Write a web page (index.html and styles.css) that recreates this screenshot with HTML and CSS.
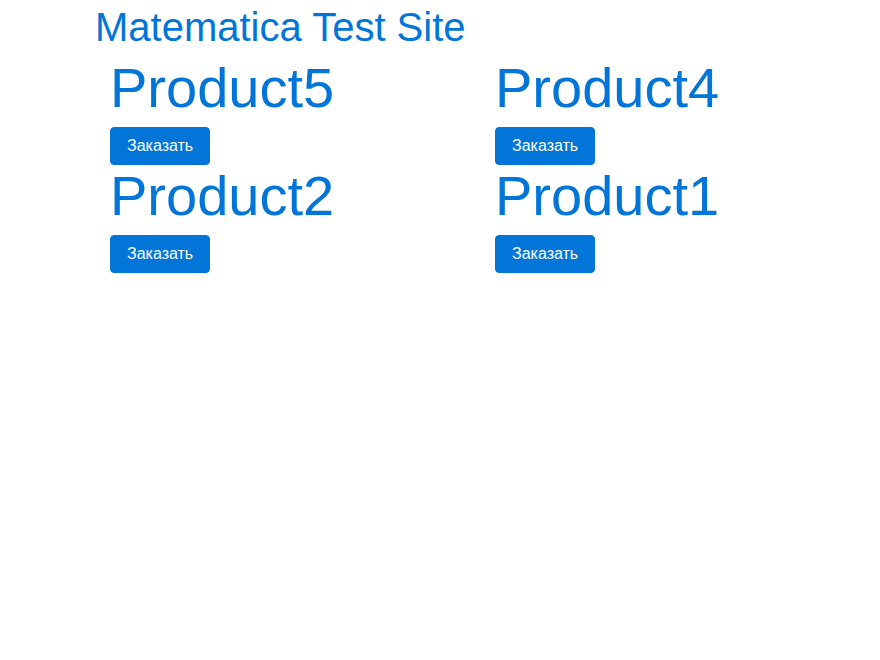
FILE: index.html
```html
<!DOCTYPE html>
<html lang="ru">
<head>
<meta charset="utf-8">
<title>Matematica Test Site</title>
<link rel="stylesheet" href="styles.css">
</head>
<body>
<div class="page">
  <h1 class="site-title"><a href="#">Matematica Test Site</a></h1>
  <main class="products">
    <article class="product">
      <h2 class="product-name"><a href="#">Product5</a></h2>
      <button class="btn" type="button">Заказать</button>
    </article>
    <article class="product">
      <h2 class="product-name"><a href="#">Product4</a></h2>
      <button class="btn" type="button">Заказать</button>
    </article>
    <article class="product">
      <h2 class="product-name"><a href="#">Product2</a></h2>
      <button class="btn" type="button">Заказать</button>
    </article>
    <article class="product">
      <h2 class="product-name"><a href="#">Product1</a></h2>
      <button class="btn" type="button">Заказать</button>
    </article>
  </main>
</div>
</body>
</html>
```
FILE: styles.css
```css
* {
  box-sizing: border-box;
}

body {
  margin: 0;
  background: #fff;
  color: #373a3c;
  font-family: "Liberation Sans", Arial, sans-serif;
  font-size: 16px;
  line-height: 24px;
}

a {
  color: #0275d8;
  text-decoration: none;
}

.page {
  padding: 5px 15px 0 95px;
}

.site-title {
  margin: 0 0 8px;
  font-size: 40px;
  font-weight: 400;
  line-height: 44px;
}

.products {
  display: grid;
  grid-template-columns: 1fr 1fr;
}

.product {
  padding: 0 15px;
}

.product-name {
  margin: 0 0 8px;
  font-size: 56px;
  font-weight: 400;
  line-height: 62px;
}

.btn {
  display: block;
  padding: 6px 16px;
  border: 1px solid #0275d8;
  border-radius: 4px;
  background: #0275d8;
  color: #fff;
  font: inherit;
  cursor: pointer;
}
```
